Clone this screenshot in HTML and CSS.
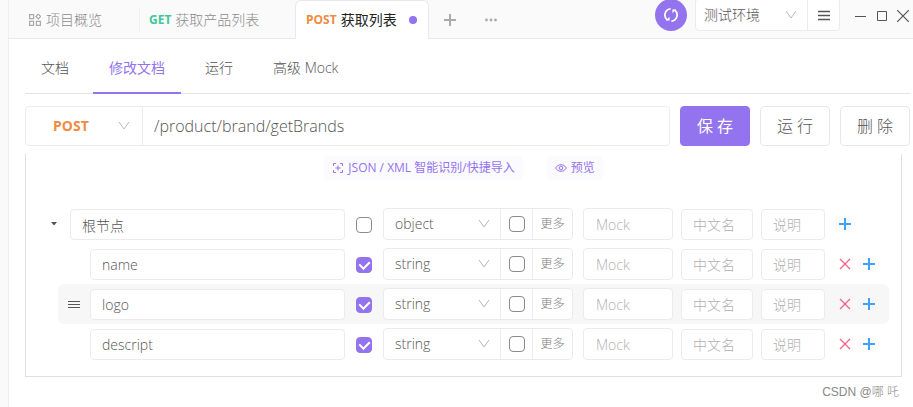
FILE: index.html
```html
<!DOCTYPE html>
<html lang="zh-CN">
<head>
<meta charset="utf-8">
<title>获取列表</title>
<link rel="stylesheet" href="styles.css">
</head>
<body>
<svg class="sprite" aria-hidden="true">
  <symbol id="chevron" viewBox="0 0 12 12"><path d="M1 2l5 7 5-7" fill="none" stroke="currentColor" stroke-width="1"/></symbol>
  <symbol id="plus" viewBox="0 0 12 12"><path d="M6 0v12M0 6h12" fill="none" stroke="currentColor" stroke-width="2"/></symbol>
  <symbol id="cross" viewBox="0 0 12 12"><path d="M1 1l10 10M11 1L1 11" fill="none" stroke="currentColor" stroke-width="1.3"/></symbol>
</svg>
<div class="app">
  <header class="topbar">
    <nav class="doc-tabs" aria-label="标签页">
      <a class="doc-tab doc-tab-home" href="#overview">
        <svg class="icon-grid" viewBox="0 0 12 12" aria-hidden="true"><g fill="none" stroke="currentColor" stroke-width="1.2"><path d="M.6.6h4v4h-4zM.6 7.4h4v4h-4zM7.4 7.4h4v4h-4z"/><path d="M9.3.1l2.4 2.4-2.4 2.4-2.4-2.4z"/></g></svg>
        <span>项目概览</span>
      </a>
      <a class="doc-tab doc-tab-list" href="#products"><b class="get">GET</b><span>获取产品列表</span></a>
      <a class="doc-tab doc-tab-active" href="#brands" aria-current="page"><b class="post">POST</b><span>获取列表</span><i class="dot"></i></a>
      <button class="tab-action" type="button" aria-label="新建"><svg class="icon" viewBox="0 0 12 12"><use href="#plus"/></svg></button>
      <button class="tab-action" type="button" aria-label="更多标签"><svg class="icon" viewBox="0 0 12 12" fill="currentColor"><circle cx="1.5" cy="6" r="1.4"/><circle cx="6" cy="6" r="1.4"/><circle cx="10.5" cy="6" r="1.4"/></svg></button>
    </nav>
    <button class="sync" type="button" aria-label="同步">
      <svg viewBox="0 0 16 16" aria-hidden="true"><g fill="none" stroke="currentColor" stroke-width="1.7"><path d="M7.600 1.800A6.200 6.200 0 0 0 4.200 12.800"/><path d="M8.400 14.200A6.200 6.200 0 0 0 11.800 3.200"/></g><path d="M2.800 13.700l3.800-.3V9.800zM13.200 2.300l-3.800.3v3.600z" fill="currentColor"/></svg>
    </button>
    <div class="env">
      <div class="select env-select">
        <select aria-label="环境"><option>测试环境</option></select>
        <svg class="icon" aria-hidden="true"><use href="#chevron"/></svg>
      </div>
      <button class="env-menu" type="button" aria-label="环境管理"><svg class="icon" viewBox="0 0 12 12"><path d="M0 2.500h12M0 6.500h12M0 10.500h12" stroke="currentColor" stroke-width="1.4"/></svg></button>
    </div>
    <div class="window-controls">
      <button type="button" aria-label="最小化"><svg class="icon" viewBox="0 0 12 12"><path d="M0 6.500h11" stroke="currentColor"/></svg></button>
      <button type="button" aria-label="最大化"><svg class="icon" viewBox="0 0 12 12"><path d="M1.500 1.500h9v9h-9z" fill="none" stroke="currentColor"/></svg></button>
      <button type="button" aria-label="关闭"><svg class="icon" viewBox="0 0 12 12"><path d="M0 0l12 12M12 0L0 12" stroke="currentColor" stroke-width="1.2"/></svg></button>
    </div>
  </header>

  <main class="content">
    <nav class="views" aria-label="视图">
      <a class="view" href="#doc">文档</a>
      <a class="view view-active" href="#edit" aria-current="page">修改文档</a>
      <a class="view" href="#run">运行</a>
      <a class="view" href="#mock">高级 Mock</a>
    </nav>

    <form class="request">
      <div class="endpoint">
        <div class="select method">
          <select aria-label="请求方法"><option>POST</option></select>
          <svg class="icon" aria-hidden="true"><use href="#chevron"/></svg>
        </div>
        <input class="url" type="text" aria-label="接口路径" value="/product/brand/getBrands">
      </div>
      <button class="btn btn-primary" type="button">保 存</button>
      <button class="btn" type="button">运 行</button>
      <button class="btn" type="button">删 除</button>
    </form>

    <section class="panel">
      <div class="tools">
        <button class="tool" type="button">
          <svg class="icon" viewBox="0 0 12 12" aria-hidden="true"><path d="M4 1.500H1.500V4M8 1.500h2.500V4M4 10.500H1.500V8M8 10.500h2.500V8M6 3.500v5M3.500 6h5" fill="none" stroke="currentColor"/></svg>
          <span>JSON / XML 智能识别/快捷导入</span>
        </button>
        <button class="tool" type="button">
          <svg class="icon" viewBox="0 0 12 12" aria-hidden="true"><path d="M.6 6C3.200 1.600 8.800 1.600 11.400 6 8.800 10.400 3.200 10.400.6 6z" fill="none" stroke="currentColor"/><circle cx="6" cy="6" r="1.800" fill="none" stroke="currentColor"/></svg>
          <span>预览</span>
        </button>
      </div>

      <div class="tree">
        <div class="row row-root">
          <button class="lead" type="button" aria-label="折叠"><svg class="caret" viewBox="0 0 8 4" aria-hidden="true"><path d="M1 0h6L4 3.500z" fill="currentColor"/></svg></button>
          <input class="field name" type="text" aria-label="名称" value="根节点">
          <input class="check required" type="checkbox" aria-label="必填">
          <div class="type">
            <div class="select"><select aria-label="类型"><option>object</option></select><svg class="icon" aria-hidden="true"><use href="#chevron"/></svg></div>
            <span class="cell"><input class="check" type="checkbox" aria-label="允许空值"></span>
            <button class="more" type="button">更多</button>
          </div>
          <input class="field mock" type="text" aria-label="Mock" placeholder="Mock">
          <input class="field title" type="text" aria-label="中文名" placeholder="中文名">
          <input class="field desc" type="text" aria-label="说明" placeholder="说明">
          <div class="actions">
            <button class="add" type="button" aria-label="添加"><svg class="icon" aria-hidden="true"><use href="#plus"/></svg></button>
          </div>
        </div>

        <div class="row">
          <span class="lead"></span>
          <input class="field name" type="text" aria-label="名称" value="name">
          <input class="check required" type="checkbox" aria-label="必填" checked>
          <div class="type">
            <div class="select"><select aria-label="类型"><option>string</option></select><svg class="icon" aria-hidden="true"><use href="#chevron"/></svg></div>
            <span class="cell"><input class="check" type="checkbox" aria-label="允许空值"></span>
            <button class="more" type="button">更多</button>
          </div>
          <input class="field mock" type="text" aria-label="Mock" placeholder="Mock">
          <input class="field title" type="text" aria-label="中文名" placeholder="中文名">
          <input class="field desc" type="text" aria-label="说明" placeholder="说明">
          <div class="actions">
            <button class="remove" type="button" aria-label="删除"><svg class="icon" aria-hidden="true"><use href="#cross"/></svg></button>
            <button class="add" type="button" aria-label="添加"><svg class="icon" aria-hidden="true"><use href="#plus"/></svg></button>
          </div>
        </div>

        <div class="row row-hover">
          <button class="lead" type="button" aria-label="拖动"><svg class="icon" viewBox="0 0 12 12" aria-hidden="true"><path d="M0 3.500h12M0 6.500h12M0 9.500h12" stroke="currentColor" stroke-width="1.200"/></svg></button>
          <input class="field name" type="text" aria-label="名称" value="logo">
          <input class="check required" type="checkbox" aria-label="必填" checked>
          <div class="type">
            <div class="select"><select aria-label="类型"><option>string</option></select><svg class="icon" aria-hidden="true"><use href="#chevron"/></svg></div>
            <span class="cell"><input class="check" type="checkbox" aria-label="允许空值"></span>
            <button class="more" type="button">更多</button>
          </div>
          <input class="field mock" type="text" aria-label="Mock" placeholder="Mock">
          <input class="field title" type="text" aria-label="中文名" placeholder="中文名">
          <input class="field desc" type="text" aria-label="说明" placeholder="说明">
          <div class="actions">
            <button class="remove" type="button" aria-label="删除"><svg class="icon" aria-hidden="true"><use href="#cross"/></svg></button>
            <button class="add" type="button" aria-label="添加"><svg class="icon" aria-hidden="true"><use href="#plus"/></svg></button>
          </div>
        </div>

        <div class="row">
          <span class="lead"></span>
          <input class="field name" type="text" aria-label="名称" value="descript">
          <input class="check required" type="checkbox" aria-label="必填" checked>
          <div class="type">
            <div class="select"><select aria-label="类型"><option>string</option></select><svg class="icon" aria-hidden="true"><use href="#chevron"/></svg></div>
            <span class="cell"><input class="check" type="checkbox" aria-label="允许空值"></span>
            <button class="more" type="button">更多</button>
          </div>
          <input class="field mock" type="text" aria-label="Mock" placeholder="Mock">
          <input class="field title" type="text" aria-label="中文名" placeholder="中文名">
          <input class="field desc" type="text" aria-label="说明" placeholder="说明">
          <div class="actions">
            <button class="remove" type="button" aria-label="删除"><svg class="icon" aria-hidden="true"><use href="#cross"/></svg></button>
            <button class="add" type="button" aria-label="添加"><svg class="icon" aria-hidden="true"><use href="#plus"/></svg></button>
          </div>
        </div>
      </div>
    </section>
    <footer class="credit">CSDN @哪 吒</footer>
  </main>
</div>
</body>
</html>
```
FILE: styles.css
```css
:root {
  --accent: #9373ee;
  --line: #ebebeb;
  --text: #555;
}

* {
  box-sizing: border-box;
}

body {
  margin: 0;
  background: #fafafa;
  color: var(--text);
  font: 14px/20px "Open Sans", "Noto Sans CJK SC", sans-serif;
  font-weight: 300;
}

button,
input,
select {
  margin: 0;
  padding: 0;
  border: 0;
  background: none;
  color: inherit;
  font: inherit;
}

a {
  color: inherit;
  text-decoration: none;
}

svg {
  display: block;
}

.sprite {
  display: none;
}

.icon {
  flex: none;
  width: 12px;
  height: 12px;
}

.app {
  min-height: 100vh;
  margin-left: 8px;
  border-left: 1px solid #efeff2;
  background: #fff;
}

/* Top bar */
.topbar {
  display: flex;
  align-items: flex-start;
  height: 39px;
  border-bottom: 1px solid #e9e8ef;
  background: #fafafa;
}

.doc-tabs {
  display: flex;
  flex: 1;
  height: 39px;
}

.doc-tab {
  display: flex;
  align-items: center;
  white-space: nowrap;
  color: #8c8c8c;
}

.doc-tab-home {
  gap: 5px;
  width: 131px;
  padding-left: 20px;
}

.doc-tab-list {
  gap: 4px;
  width: 155px;
  padding-left: 9px;
}

.doc-tab-list::before {
  content: "";
  width: 1px;
  height: 24px;
  margin-left: -10px;
  margin-right: 5px;
  background: #f1f1f1;
}

.doc-tab-active {
  gap: 4px;
  width: 134px;
  padding-left: 10px;
  border: 1px solid #e9e8ef;
  border-bottom: 0;
  border-radius: 6px 6px 0 0;
  background: #fff;
  color: #222;
  font-weight: 400;
}

.icon-grid {
  width: 12px;
  height: 12px;
  color: #aaa;
}

.get,
.post {
  font-size: 12px;
  font-weight: 700;
}

.get {
  color: #3fc79a;
}

.post {
  color: #ef8b3f;
}

.dot {
  width: 8px;
  height: 8px;
  margin-left: 8px;
  border-radius: 50%;
  background: var(--accent);
}

.tab-action {
  display: grid;
  place-items: center;
  width: 40px;
  color: #aaa;
}

.tab-action:first-of-type {
  width: 42px;
}

.sync {
  display: grid;
  place-items: center;
  width: 32px;
  height: 32px;
  margin: -1px 8px 0 0;
  border-radius: 50%;
  background: var(--accent);
  color: #fff;
}

.sync svg {
  width: 16px;
  height: 16px;
}

.env {
  display: flex;
  height: 33px;
  margin-top: -2px;
  border: 1px solid var(--line);
  border-radius: 4px;
  background: #fff;
}

.env-menu {
  display: grid;
  place-items: center;
  width: 32px;
  border-left: 1px solid var(--line);
}

.window-controls {
  display: flex;
  height: 31px;
  padding: 0 4px 0 15px;
  gap: 9px;
  align-items: center;
}

/* Drop-downs: the chevron lies in the same grid cell as the select */
.select {
  display: grid;
  grid-template-columns: minmax(0, 1fr);
  align-items: center;
}

.select > * {
  grid-area: 1 / 1;
}

.select select {
  width: 100%;
  height: 100%;
  padding-left: 12px;
  appearance: none;
}

.select .icon {
  justify-self: end;
  margin-right: 10px;
  color: #b8b8b8;
  pointer-events: none;
}

.env-select {
  width: 111px;
}

.env-select select {
  padding-left: 8px;
}

/* Page content */
.content {
  padding: 0 3px 0 16px;
}

.views {
  display: flex;
  gap: 8px;
  height: 55px;
  border-bottom: 1px solid #e4e4e4;
}

.view {
  height: 55px;
  padding: 19px 16px 0;
}

.view-active {
  border-bottom: 2px solid var(--accent);
  color: var(--accent);
  font-weight: 400;
}

.request {
  display: flex;
  gap: 10px;
  padding-top: 12px;
}

.endpoint {
  display: flex;
  flex: 1;
  height: 40px;
  border: 1px solid var(--line);
  border-radius: 4px;
}

.method {
  width: 117px;
  border-right: 1px solid var(--line);
}

.method select {
  padding-left: 27px;
  color: #ef8b3f;
  font-weight: 700;
}

.method .icon {
  margin-right: 12px;
}

.url {
  flex: 1;
  min-width: 0;
  padding: 0 11px;
  font-size: 16px;
}

.btn {
  width: 70px;
  height: 40px;
  border: 1px solid #e8e8e8;
  border-radius: 4px;
  font-size: 16px;
}

.btn-primary {
  border-color: var(--accent);
  background: var(--accent);
  color: #fff;
  font-weight: 400;
}

.panel {
  margin: 8px 8px 0 0;
  padding-bottom: 12px;
  border: 1px solid #e0e0e0;
  border-top: 0;
}

.tools {
  display: flex;
  justify-content: center;
  gap: 24px;
  padding: 2px 0 24px;
}

.tool {
  display: flex;
  align-items: center;
  gap: 4px;
  height: 24px;
  padding: 0 8px;
  border-radius: 4px;
  background: #fbfaff;
  color: var(--accent);
  font-size: 12px;
  font-weight: 400;
}

.tree {
  padding: 0 12px;
}

.row {
  display: flex;
  align-items: flex-end;
  height: 40px;
  margin-left: 20px;
  padding-bottom: 4px;
  border-radius: 6px;
}

.row-root {
  margin-left: 0;
}

.row-hover {
  background: #f7f7f7;
}

.lead {
  display: grid;
  place-items: center;
  width: 32px;
  height: 32px;
}

.caret {
  width: 8px;
  height: 4px;
}

.field {
  min-width: 0;
  height: 31px;
  padding: 0 11px;
  border: 1px solid var(--line);
  border-radius: 4px;
  background: #fff;
}

.field::placeholder {
  color: #b0b0b0;
}

.name {
  flex: 1;
}

.check {
  display: grid;
  place-items: center;
  width: 16px;
  height: 16px;
  border: 1px solid #8c8c8c;
  border-radius: 4px;
  background: #fff;
  appearance: none;
}

.check:checked {
  border-color: var(--accent);
  background: var(--accent);
}

.check:checked::after {
  content: "";
  width: 5px;
  height: 8px;
  margin-top: -2px;
  border: solid #fff;
  border-width: 0 2px 2px 0;
  transform: rotate(45deg);
}

.required {
  margin: 0 11px 7px;
}

.type {
  display: flex;
  width: 190px;
  height: 32px;
  margin-right: 10px;
  border: 1px solid var(--line);
  border-radius: 4px;
  background: #fff;
}

.type .select {
  flex: 1;
}

.type .select select {
  padding-left: 11px;
}

.cell {
  display: grid;
  place-items: center;
  width: 32px;
  border-left: 1px solid var(--line);
}

.more {
  width: 40px;
  border-left: 1px solid var(--line);
  color: #808080;
  font-size: 12px;
}

.mock {
  width: 90px;
  height: 32px;
  margin-right: 8px;
  padding-left: 12px;
}

.title {
  width: 72px;
  margin-right: 8px;
}

.desc {
  width: 64px;
}

.actions {
  display: flex;
  align-items: center;
  width: 64px;
  height: 32px;
  padding: 0 8px;
}

.actions button {
  display: grid;
  place-items: center;
  width: 24px;
  height: 24px;
}

.add {
  color: #40a2ff;
}

.remove {
  color: #f75f83;
}

.credit {
  padding: 5px 11px 0 0;
  color: #888;
  font-family: "Liberation Sans", "Noto Sans CJK SC", sans-serif;
  font-size: 12px;
  text-align: right;
}
```
